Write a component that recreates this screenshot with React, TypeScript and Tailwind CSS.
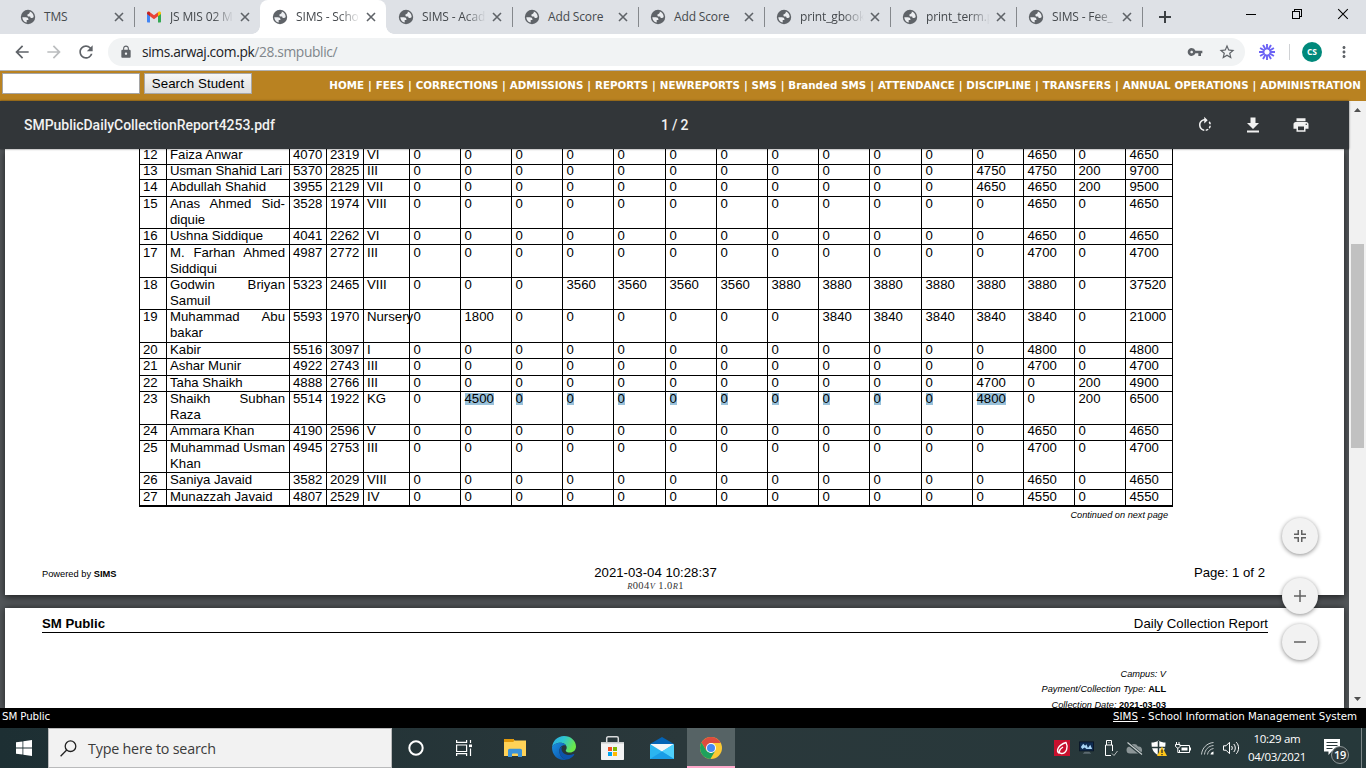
import type { ReactNode } from "react";
import {
  MdArrowBack,
  MdArrowForward,
  MdRefresh,
  MdLock,
  MdVpnKey,
  MdStarBorder,
  MdMoreVert,
  MdPrint,
  MdRotateRight,
} from "react-icons/md";

const TABS: { title: string; icon?: "gmail"; active?: boolean; sep?: boolean; fade?: boolean }[] = [
  { title: "TMS", sep: true },
  { title: "JS MIS 02 M", icon: "gmail", fade: true },
  { title: "SIMS - Scho", active: true, fade: true },
  { title: "SIMS - Acad", sep: true, fade: true },
  { title: "Add Score", sep: true },
  { title: "Add Score", sep: true },
  { title: "print_gbook", sep: true, fade: true },
  { title: "print_term.p", sep: true, fade: true },
  { title: "SIMS - Fee_", sep: true, fade: true },
];

const MENU =
  "HOME | FEES | CORRECTIONS | ADMISSIONS | REPORTS | NEWREPORTS | SMS | Branded SMS | ATTENDANCE | DISCIPLINE | TRANSFERS | ANNUAL OPERATIONS | ADMINISTRATION";

type Row = {
  no: number;
  name: string[];
  a: number;
  b: number;
  cls: string;
  fees: number[];
  h: string;
  shift?: string;
  marked?: boolean;
};

const z = (n: number) => Array<number>(n).fill(0);

const ROWS: Row[] = [
  { no: 12, name: ["Faiza Anwar"], a: 4070, b: 2319, cls: "VI", fees: [...z(12), 4650, 0, 4650], h: "h-[16px]", shift: "-mt-[2px]" },
  { no: 13, name: ["Usman Shahid Lari"], a: 5370, b: 2825, cls: "III", fees: [...z(11), 4750, 4750, 200, 9700], h: "h-[15px]", shift: "-mt-[2px]" },
  { no: 14, name: ["Abdullah Shahid"], a: 3955, b: 2129, cls: "VII", fees: [...z(11), 4650, 4650, 200, 9500], h: "h-[17px]" },
  { no: 15, name: ["Anas Ahmed Sid-", "diquie"], a: 3528, b: 1974, cls: "VIII", fees: [...z(12), 4650, 0, 4650], h: "h-[32px]" },
  { no: 16, name: ["Ushna Siddique"], a: 4041, b: 2262, cls: "VI", fees: [...z(12), 4650, 0, 4650], h: "h-[16px]" },
  { no: 17, name: ["M. Farhan Ahmed", "Siddiqui"], a: 4987, b: 2772, cls: "III", fees: [...z(12), 4700, 0, 4700], h: "h-[33px]", shift: "mt-0" },
  { no: 18, name: ["Godwin Briyan", "Samuil"], a: 5323, b: 2465, cls: "VIII", fees: [0, 0, 0, 3560, 3560, 3560, 3560, 3880, 3880, 3880, 3880, 3880, 3880, 0, 37520], h: "h-[32px]" },
  { no: 19, name: ["Muhammad Abu", "bakar"], a: 5593, b: 1970, cls: "Nursery", fees: [0, 1800, ...z(6), 3840, 3840, 3840, 3840, 3840, 0, 21000], h: "h-[33px]" },
  { no: 20, name: ["Kabir"], a: 5516, b: 3097, cls: "I", fees: [...z(12), 4800, 0, 4800], h: "h-[16px]" },
  { no: 21, name: ["Ashar Munir"], a: 4922, b: 2743, cls: "III", fees: [...z(12), 4700, 0, 4700], h: "h-[17px]" },
  { no: 22, name: ["Taha Shaikh"], a: 4888, b: 2766, cls: "III", fees: [...z(11), 4700, 0, 200, 4900], h: "h-[16px]" },
  { no: 23, name: ["Shaikh Subhan", "Raza"], a: 5514, b: 1922, cls: "KG", fees: [0, 4500, ...z(9), 4800, 0, 200, 6500], h: "h-[33px]", marked: true },
  { no: 24, name: ["Ammara Khan"], a: 4190, b: 2596, cls: "V", fees: [...z(12), 4650, 0, 4650], h: "h-[16px]", shift: "-mt-[2px]" },
  { no: 25, name: ["Muhammad Usman", "Khan"], a: 4945, b: 2753, cls: "III", fees: [...z(12), 4700, 0, 4700], h: "h-[32px]" },
  { no: 26, name: ["Saniya Javaid"], a: 3582, b: 2029, cls: "VIII", fees: [...z(12), 4650, 0, 4650], h: "h-[17px]" },
  { no: 27, name: ["Munazzah Javaid"], a: 4807, b: 2529, cls: "IV", fees: [...z(12), 4550, 0, 4550], h: "h-[16px]" },
];

function Gmail() {
  return (
    <svg viewBox="0 0 16 16" className="size-4">
      <path d="M1 4v8.5c0 .6.4 1 1 1h2V6.500z" fill="#4285f4" />
      <path d="M12 6.500v7h2c.6 0 1-.4 1-1V4z" fill="#34a853" />
      <path d="M12 3.200v4.100l3-2.200V4c0-1.500-1.500-2-2.500-1.200z" fill="#fbbc04" />
      <path d="M1 4v1.100l3 2.200V3.200l-.5-.4C2.500 2 1 2.500 1 4z" fill="#c5221f" />
      <path d="M4 3.200v4.100l4 3 4-3V3.200l-4 3z" fill="#ea4335" />
    </svg>
  );
}

function Globe() {
  return (
    <svg viewBox="0 0 16 16" className="size-4 shrink-0">
      <circle cx="8" cy="8" r="7.200" fill="#5f6368" />
      <path
        d="M2.300 8.200h3.500c1.700 0 2.600.9 2.600 2.100v.7H6.700v2.500C4.200 13 2.300 10.800 2.300 8.200z"
        fill="#eceef1"
      />
      <path
        d="M9.800 2.600c2.200.8 3.800 2.900 3.900 5.400-.6 1-1.500 1.200-2.500 1-.8-.2-1-.9-1-1.600-.8.2-2.200.2-2.700-.7-.4-.9.1-1.500 1-1.700C9.500 4.700 10 3.800 9.800 2.600z"
        fill="#eceef1"
      />
    </svg>
  );
}

function Cross({ className }: { className: string }) {
  return (
    <svg viewBox="0 0 10 10" className={className} fill="none" stroke="currentColor">
      <path d="M1 1l8 8M9 1l-8 8" />
    </svg>
  );
}

function TabStrip() {
  return (
    <div className="flex h-[34px] bg-[#dee1e6] pl-2 font-['Open_Sans',sans-serif] text-[12px] text-[#45494d]">
      {TABS.map((t, i) => (
        <div
          key={i}
          className={
            "relative flex w-[126px] shrink-0 items-center pl-3 " +
            (t.active ? "rounded-t-[8px] bg-white" : "")
          }
        >
          {t.active && (
            <>
              <span className="absolute bottom-0 -left-2 size-2 bg-[radial-gradient(circle_at_0_0,transparent_7.5px,white_8px)]" />
              <span className="absolute -right-2 bottom-0 size-2 bg-[radial-gradient(circle_at_100%_0,transparent_7.5px,white_8px)]" />
            </>
          )}
          {t.icon ? <Gmail /> : <Globe />}
          <div
            className={
              "ml-2 w-[66px] tracking-[-0.15px] whitespace-nowrap " +
              (t.fade ? "[mask-image:linear-gradient(to_right,black_65%,transparent_97%)]" : "")
            }
          >
            {t.title}
          </div>
          <Cross className="ml-1 size-[10px] stroke-[1.600] text-[#5f6368]" />
          {t.sep && <span className="absolute top-[7px] -right-px h-5 w-px bg-[#85888c]" />}
        </div>
      ))}
      <svg viewBox="0 0 12 12" className="mt-[11px] ml-[17px] size-3 stroke-[#3c4043] stroke-2">
        <path d="M6 0v12M0 6h12" />
      </svg>
      <div className="ml-auto flex text-black">
        <svg viewBox="0 0 10 10" className="mt-[10px] mr-[36px] size-[10px]" stroke="currentColor" shapeRendering="crispEdges">
          <path d="M0 4.500h10" />
        </svg>
        <svg viewBox="0 0 10 10" className="mt-[9px] mr-[35px] size-[10px]" fill="none" stroke="currentColor" shapeRendering="crispEdges">
          <path d="M.5 2.500h7v7h-7zM2.500 2.500v-2h7v7h-2" />
        </svg>
        <Cross className="mt-[8px] mr-[17px] size-[12px] stroke-[.9]" />
      </div>
    </div>
  );
}

function AddressBar() {
  return (
    <div className="flex h-[36px] items-center bg-white text-[#5f6368]">
      <MdArrowBack className="ml-[12px] size-5" />
      <MdArrowForward className="ml-[12px] size-5 text-[#bbbdbf]" />
      <MdRefresh className="ml-[12px] size-5" />
      <div className="ml-[12px] flex h-7 w-[1137px] items-center rounded-full bg-[#f1f3f4] pl-[11px] font-['Open_Sans',sans-serif] text-[13.800px] tracking-[-0.38px] text-[#80868b]">
        <MdLock className="size-[14px] text-[#5f6368]" />
        <span className="mt-px ml-[9px]">
          <span className="text-[#202124]">sims.arwaj.com.pk</span>/28.smpublic/
        </span>
        <MdVpnKey className="mr-[15px] ml-auto size-4 text-[#5f6368]" />
        <MdStarBorder className="mr-[9px] size-[18px] text-[#5f6368]" />
      </div>
      <svg viewBox="0 0 16 16" className="ml-[14px] size-4 stroke-[#6c63f5] stroke-[1.900]">
        <path d="M10.500 8H16M10.200 9.200l4.700 2.800M9.200 10.200l2.800 4.700M8 10.500V16M6.800 10.200L4 14.900M5.800 9.200L1.100 12M5.500 8H0M5.800 6.800L1.100 4M6.800 5.800L4 1.100M8 5.500V0M9.200 5.800L12 1.100M10.200 6.800L14.900 4" />
      </svg>
      <span className="ml-[14px] h-4 w-px bg-[#d0d2d5]" />
      <span className="ml-[12px] flex size-5 items-center justify-center rounded-full bg-[#00897b] font-['Open_Sans',sans-serif] text-[8.500px] font-bold text-white">
        CS
      </span>
      <MdMoreVert className="ml-[13px] size-[18px]" />
    </div>
  );
}

function MenuBar() {
  return (
    <div className="flex h-[31px] items-start border-t border-[#b0b1b3] bg-[#b98221]">
      <div className="mt-[2px] ml-[2px] h-[21px] w-[138px] border border-[#a5a5a5] bg-white" />
      <div className="mt-[2px] ml-[4px] h-[21px] w-[108px] border border-[#a8a8a8] bg-gradient-to-b from-[#f6f6f6] to-[#dedede] text-center font-['Liberation_Sans',sans-serif] text-[13.3px] leading-[19px] tracking-[0.05px] whitespace-nowrap text-black">
        Search Student
      </div>
      <div className="mt-[6px] mr-[5px] ml-auto font-['DejaVu_Sans',sans-serif] text-[10.300px] leading-[16px] font-bold [word-spacing:0.35px] whitespace-nowrap text-white">
        {MENU}
      </div>
    </div>
  );
}

function ViewerToolbar() {
  return (
    <div className="relative z-10 flex h-12 shrink-0 items-center bg-[#323639] pr-[39px] pl-6 font-[Roboto,sans-serif] text-[14px] font-medium text-[#f1f1f1] shadow-[0_0_2px_rgba(0,0,0,0.6)]">
      <span className="w-[637px] tracking-[-0.03px]">SMPublicDailyCollectionReport4253.pdf</span>
      <span className="tracking-[-0.2px]">1 / 2</span>
      <MdRotateRight className="mr-[30px] ml-auto size-[18px]" />
      <svg viewBox="0 0 18 18" className="mr-[30px] size-[18px] fill-current">
        <path d="M15 7h-3.500V1.500h-5V7H3l6 6zM3 14.500v2h12v-2z" />
      </svg>
      <MdPrint className="size-[18px]" />
    </div>
  );
}

function ReportTable() {
  return (
    <div className="ml-[134px] w-[1034px] border-b border-black">
      {ROWS.map((r) => (
        <div
          key={r.no}
          className={
            "grid grid-cols-[28px_123px_37px_37px_46px_51px_51px_51px_51px_52px_51px_51px_51px_51px_52px_51px_51px_51px_51px_47px] border-b border-black " +
            r.h
          }
        >
          <Cell first shift={r.shift}>
            {r.no}
          </Cell>
          <Cell shift={r.shift}>
            {r.name.map((line, i) => (
              <span
                key={i}
                className={
                  "block w-[115px] " +
                  (r.name.length > 1 && i === 0 ? "[text-align-last:justify]" : "")
                }
              >
                {line}
              </span>
            ))}
          </Cell>
          <Cell shift={r.shift}>{r.a}</Cell>
          <Cell shift={r.shift}>{r.b}</Cell>
          <Cell shift={r.shift}>{r.cls}</Cell>
          {r.fees.map((f, i) => (
            <Cell key={i} fee shift={r.shift}>
              {r.marked && i > 0 && i < 12 ? (
                <span className="mt-[2px] inline-block h-[12px] bg-[#99c1da] align-top leading-[12px]">{f}</span>
              ) : (
                f
              )}
            </Cell>
          ))}
        </div>
      ))}
    </div>
  );
}

function Cell({
  children,
  first,
  fee,
  shift,
}: {
  children: ReactNode;
  first?: boolean;
  fee?: boolean;
  shift?: string;
}) {
  return (
    <div
      className={
        "min-w-0 border-r border-black " +
        (first ? "border-l " : "") +
        (fee ? "pl-[3.500px]" : "pl-[3px]")
      }
    >
      <div className={"leading-[16px] whitespace-nowrap " + (shift ?? "-mt-px")}>{children}</div>
    </div>
  );
}

function Document() {
  return (
    <div className="h-[559px] overflow-hidden bg-[#525659] px-[5px] font-['Liberation_Sans',sans-serif] text-[13.200px] text-black">
      <div className="flex h-[446px] flex-col bg-white shadow-[0_2px_7px_rgba(0,0,0,0.65)]">
        <ReportTable />
        <div className="mt-[1px] mr-[176px] text-right text-[9.200px] leading-[14px] italic">
          Continued on next page
        </div>
        <div className="mt-auto mb-[4px] flex items-start pr-[79px] pl-[37px] leading-[16px]">
          <div className="w-[551px] pt-px text-[9.300px]">
            Powered by <b>SIMS</b>
          </div>
          <div className="w-[125px] text-center">
            <div className="whitespace-nowrap">2021-03-04 10:28:37</div>
            <div className="font-['Liberation_Serif',serif] text-[10.500px] leading-[10px] tracking-[0.4px] text-[#333]">
              <i className="text-[8.500px]">R</i>004<i className="text-[8.500px]">V</i> 1.0
              <i className="text-[8.500px]">R</i>1
            </div>
          </div>
          <div className="ml-auto">Page: 1 of 2</div>
        </div>
      </div>
      <div className="mt-[13px] h-[100px] bg-white pr-[76px] pl-[37px] shadow-[0_0_7px_rgba(0,0,0,0.6)]">
        <div className="flex h-[25px] items-start justify-between border-b border-black pt-[8px] leading-[16px]">
          <b className="text-[13.200px]">SM Public</b>
          <span className="text-[13.200px]">Daily Collection Report</span>
        </div>
        <div className="mt-[34px] mr-[102px] text-right text-[9.200px] leading-[15px]">
          <div>
            <i>Campus: V</i>
          </div>
          <div>
            <i>Payment/Collection Type:</i> <b>ALL</b>
          </div>
          <div className="pt-px">
            <i>Collection Date:</i> <b>2021-03-03</b>
          </div>
        </div>
      </div>
    </div>
  );
}

function RoundButton({ path, className }: { path: string; className: string }) {
  return (
    <div
      className={
        "absolute left-[1282px] z-20 flex size-9 items-center justify-center rounded-full bg-[#f2f2f2] shadow-[0_1px_4px_rgba(0,0,0,0.45)] " +
        className
      }
    >
      <svg viewBox="0 0 12 12" className="size-3 fill-none stroke-[#616161] stroke-[1.500]">
        <path d={path} />
      </svg>
    </div>
  );
}

function Viewer() {
  return (
    <div className="flex h-[607px]">
      <div className="relative flex w-[1349px] flex-col">
        <ViewerToolbar />
        <Document />
        <RoundButton className="top-[417px]" path="M0 4.250h4.250V0M7.750 0v4.250H12M12 7.750H7.750V12M4.250 12V7.750H0" />
        <RoundButton className="top-[477px]" path="M6 0v12M0 6h12" />
        <RoundButton className="top-[523px]" path="M0 6h12" />
      </div>
      <div className="flex w-[17px] flex-col items-center bg-[#f1f1f1]">
        <svg viewBox="0 0 7 4" className="mt-[7px] h-1 w-[7px] fill-[#505050]">
          <path d="M0 4h7L3.500 0z" />
        </svg>
        <div className="mt-[132px] h-[204px] w-[13px] bg-[#c1c1c1]" />
        <svg viewBox="0 0 7 4" className="mt-auto mb-[7px] h-1 w-[7px] fill-[#505050]">
          <path d="M0 0h7L3.500 4z" />
        </svg>
      </div>
    </div>
  );
}

function SiteFooter() {
  return (
    <div className="flex h-5 justify-between bg-black pr-[9px] pl-[2px] font-['DejaVu_Sans',sans-serif] text-[10.250px] leading-[17px] text-white">
      <span className="tracking-[-0.1px]">SM Public</span>
      <span>
        <u>SIMS</u> - School Information Management System
      </span>
    </div>
  );
}

function Taskbar() {
  return (
    <div className="flex h-10 items-center bg-gradient-to-r from-[#1d2f33] via-[#2a383b] to-[#26383a] text-white">
      <div className="flex w-12 justify-center">
        <svg viewBox="0 0 16 16" className="size-4 fill-white">
          <path d="M0 2.300L6.500 1.400v6.200H0zM7.300 1.300L16 0v7.600H7.300zM0 8.400h6.500v6.200L0 13.700zM7.300 8.400H16V16l-8.700-1.300z" />
        </svg>
      </div>
      <div className="flex h-10 w-[344px] items-center border border-[#b9babb] bg-[#f2f2f2] pl-[11px] font-['Open_Sans',sans-serif] text-[14.300px] text-[#3b3b3b]">
        <svg viewBox="0 0 17 17" className="size-[17px] fill-none stroke-[#222] stroke-[1.300]">
          <circle cx="10.500" cy="6.200" r="5.300" />
          <path d="M6.700 10L.6 16.200" />
        </svg>
        <span className="mt-px ml-[11px] tracking-[-0.200px]">Type here to search</span>
      </div>
      <div className="flex w-12 justify-center">
        <svg viewBox="0 0 16 16" className="size-4 fill-none stroke-white stroke-2">
          <circle cx="8" cy="8" r="6.700" />
        </svg>
      </div>
      <div className="flex w-12 justify-center">
        <svg viewBox="0 0 16 16" className="size-4 fill-none stroke-white stroke-[1.200]">
          <path d="M.6 0v2.400h10V0M.6 5h10v6.500H.6zM.6 16v-2.400h10V16M14.500 0v3M14.500 8.500V16" />
          <path d="M13 4.500h3v2.600h-3z" className="fill-white stroke-none" />
        </svg>
      </div>
      <div className="flex w-[54px] justify-center">
        <svg viewBox="0 0 22 18" className="h-[18px] w-[22px]">
          <path d="M0 0h9.500l1 1.500H22V17H0z" fill="#ffd257" />
          <path d="M0 0h9.500l.8 1.500-1 1.500H0z" fill="#e2990a" />
          <path d="M4 18v-6.500c0-1 .7-1.700 1.700-1.700h10.600c1 0 1.700.7 1.700 1.700V18h-4v-2.500c0-.6-.4-1-1-1H9c-.6 0-1 .4-1 1V18z" fill="#3c93d8" />
        </svg>
      </div>
      <div className="flex w-[44px] justify-center">
        <svg viewBox="0 0 24 24" className="size-6">
          <defs>
            <linearGradient id="edgeTop" x1="0" y1="0" x2="1" y2=".4">
              <stop offset="0" stopColor="#2aa9e8" />
              <stop offset=".5" stopColor="#2fc6cf" />
              <stop offset="1" stopColor="#6be84a" />
            </linearGradient>
            <linearGradient id="edgeLow" x1="0" y1="0" x2="1" y2="1">
              <stop offset="0" stopColor="#1a8fe0" />
              <stop offset="1" stopColor="#0a4fa8" />
            </linearGradient>
          </defs>
          <path d="M0 11.500C.5 5 5.500 0 12 0c7 0 12 5 12 10.500 0 3.800-2.800 6-6 6-2.700 0-4.300-1-4.300-1.800 0-.7 1-1.200 1-3.200C14.700 9 12 6.800 8.500 6.800 4 6.800.5 9.500 0 11.500z" fill="url(#edgeTop)" />
          <path d="M0 11.500c.5-2.500 4-4.700 8.500-4.700 2.500 0 4.500 1 5.500 2.700C10 8.500 7.300 11.500 7.300 15c0 4.500 3.500 7.500 7.500 9-1 .1-2 .1-2.800 0C5 24 0 18.500 0 11.500z" fill="url(#edgeLow)" />
          <path d="M10.500 10.500c-2 .8-3.200 2.500-3.200 4.500 0 4.500 3.700 8 7.700 8.600 3-.7 5.700-2.600 7.200-4.900.3-.6-.1-.9-.7-.6-1.300.7-2.700 1-4.200 1-4.500 0-7.800-3-7.800-6.300 0-.9.4-1.700 1-2.300z" fill="#0d54ad" />
        </svg>
      </div>
      <div className="flex w-[53px] justify-center">
        <svg viewBox="0 0 23 24" className="h-6 w-[23px]">
          <path d="M5.700 7V2.200c0-.8.500-1.400 1.400-1.400h8.800c.9 0 1.400.6 1.400 1.400V7" fill="none" stroke="#d8dadb" strokeWidth="1.500" />
          <path d="M0 6.500h23V23c0 .6-.4 1-1 1H1c-.6 0-1-.4-1-1z" fill="#f3f3f3" />
          <path d="M0 6h23v1.500H0z" fill="#c9cbcc" />
          <path d="M7 11h4v4H7z" fill="#f25022" />
          <path d="M12 11h4v4h-4z" fill="#7fba00" />
          <path d="M7 16h4v4H7z" fill="#00a4ef" />
          <path d="M12 16h4v4h-4z" fill="#ffb900" />
        </svg>
      </div>
      <div className="flex w-[46px] justify-center">
        <svg viewBox="0 0 24 22" className="h-[22px] w-6">
          <path d="M0 7l12-7 12 7-4 5H4z" fill="#0463b5" />
          <path d="M1 7h22v8H1z" fill="#f4f6f8" />
          <path d="M0 7l12 7.500L24 7v15H0z" fill="#2bb5f0" />
          <path d="M24 7L12 14.500 24 22z" fill="#4fd0fb" />
          <path d="M0 22l12-7.500L24 22z" fill="#1a9de6" />
        </svg>
      </div>
      <div className="ml-[2px] flex h-10 w-12 items-center justify-center border-b-2 border-[#ffa9cb] bg-[#566365] pt-[2px]">
        <svg viewBox="0 0 22 22" className="size-[22px]">
          <circle cx="11" cy="11" r="11" fill="#fbc934" />
          <path d="M1.500 5.500A11 11 0 0 1 20.500 5.500L20.600 6H11L6.300 13.500z" fill="#dd4b3e" />
          <path d="M1.500 5.500A11 11 0 0 0 10.400 22L15.400 13.500 11 16 6.300 13.500z" fill="#1fa15d" />
          <circle cx="11" cy="11" r="5" fill="#fff" />
          <circle cx="11" cy="11" r="4" fill="#4688f4" />
        </svg>
      </div>
      <Tray />
    </div>
  );
}

function Tray() {
  return (
    <div className="ml-auto flex h-10 items-center">
      <svg viewBox="0 0 16 16" className="size-[16px]">
        <path d="M0 0h16v16H0z" fill="#c8102e" />
        <path d="M5.500 13.500C1.500 11 4 5 12 2.500c2.500 4.500.5 11-4.500 11-3.500-.5-2.500-4 1.500-6.500" fill="none" stroke="#fff" strokeWidth="1.400" />
      </svg>
      <svg viewBox="0 0 16 14" className="ml-[9px] h-[14px] w-[15px]">
        <path d="M0 0h16v10.500H0z" fill="#0b1726" />
        <path d="M1 1h14v8.500H1z" fill="#0f2c52" />
        <path d="M2 6l2.500-3.500 2 2L8 3l1.500 4L12 3.500 14 8H8L6 6.500 3.500 8z" fill="#a9d5f5" />
        <path d="M6 11h5l2 2H4z" fill="#5c6a70" />
      </svg>
      <svg viewBox="0 0 14 17" className="ml-[10px] h-[17px] w-[14px] fill-none stroke-white">
        <path d="M2.500 5V.5h5V5M1.500 5h7v6M1.500 5v10.500H7M4 2.500h.5M5.700 2.500h.5" />
        <path d="M8 13.500l2 2 3.500-4.500" stroke="#b4bbbc" />
      </svg>
      <svg viewBox="0 0 17 13" className="ml-[8px] h-[13px] w-[17px]">
        <path d="M4 11.500a3.500 3.500 0 0 1 0-7A4.500 4.500 0 0 1 12 4.500a3.500 3.500 0 0 1 1 7z" fill="#8b9597" />
        <path d="M1 .5L15.500 12.500" stroke="#26383a" strokeWidth="3" />
        <path d="M1.500.5L16 12.500" stroke="#c9cecf" strokeWidth="1.200" />
      </svg>
      <svg viewBox="0 0 16 16" className="ml-[8px] size-4">
        <path d="M7.500.5C9.500 2 12 2.500 14.500 2.500c0 6-1.500 10-7 13C2 12.500.5 8.500.5 2.500 3 2.500 5.500 2 7.500.5z" fill="#fff" />
        <path d="M7.500 1v14M1 7.500h13.500" stroke="#26383a" strokeWidth="1.500" />
        <path d="M11 6.500l5 9.500H6z" fill="#ffc61a" />
        <path d="M11 9.500v3.500M11 14v1.200" stroke="#222" strokeWidth="1.200" />
      </svg>
      <svg viewBox="0 0 16 13" className="ml-[8px] h-[13px] w-4 fill-none stroke-white">
        <path d="M5 3.500h9.500v7H4.500V8M15.500 5.500v3M1.500 0v2.500M4 0v2.500M.5 2.500h4.500v2L3.500 6h-1L.5 4.500zM2.800 6v4.500H5" />
        <path d="M6.500 5.500h6v3h-6z" className="fill-white stroke-none" />
      </svg>
      <svg viewBox="0 0 13 13" className="ml-[10px] size-[13px] fill-none stroke-white">
        <path d="M.5 12.500C1 6 6 1 12.500.5M3.500 12.500c.4-4.800 4-8.600 9-9M6.500 12.500c.3-3 2.700-5.500 6-6" stroke="#c3c9ca" />
        <path d="M9.500 12.500c.2-1.500 1.300-2.700 3-3v3z" className="fill-white stroke-none" />
      </svg>
      <svg viewBox="0 0 17 14" className="ml-[9px] h-[14px] w-[17px] fill-none stroke-white">
        <path d="M.5 4.800H3l3.500-3.500v11.400L3 9.200H.5z" />
        <path d="M8.500 5c1 1.200 1 2.800 0 4M10.800 3c2 2.200 2 5.800 0 8M13.300 1.200c3 3.200 3 8.400 0 11.600" />
      </svg>
      <div className="-mt-px ml-[7px] w-[60px] text-center font-['Open_Sans',sans-serif] text-[11.500px] leading-[18px] tracking-[-0.3px] whitespace-nowrap">
        <div>10:29 am</div>
        <div>04/03/2021</div>
      </div>
      <div className="relative ml-[17px] h-[26px] w-[26px]">
        <svg viewBox="0 0 16 17" className="mt-[4px] h-[17px] w-4">
          <path d="M0 0h16v12.500H7.500L4.500 16v-3.500H0z" fill="#fff" />
          <path d="M2.500 3.500h11M2.500 6.500h11M2.500 9.500h6" stroke="#2a383b" />
        </svg>
        <span className="absolute top-[11px] left-[7px] flex size-[18px] items-center justify-center rounded-full border border-[#8d9698] bg-[#2f3b3d] font-['Open_Sans',sans-serif] text-[11px] font-semibold tracking-[-0.4px]">
          19
        </span>
      </div>
      <span className="mr-[4px] ml-[11px] h-10 w-px bg-[#7c8688]" />
    </div>
  );
}

export default function App() {
  return (
    <div className="flex h-[768px] w-[1366px] flex-col overflow-hidden bg-white">
      <TabStrip />
      <AddressBar />
      <MenuBar />
      <Viewer />
      <SiteFooter />
      <Taskbar />
    </div>
  );
}
